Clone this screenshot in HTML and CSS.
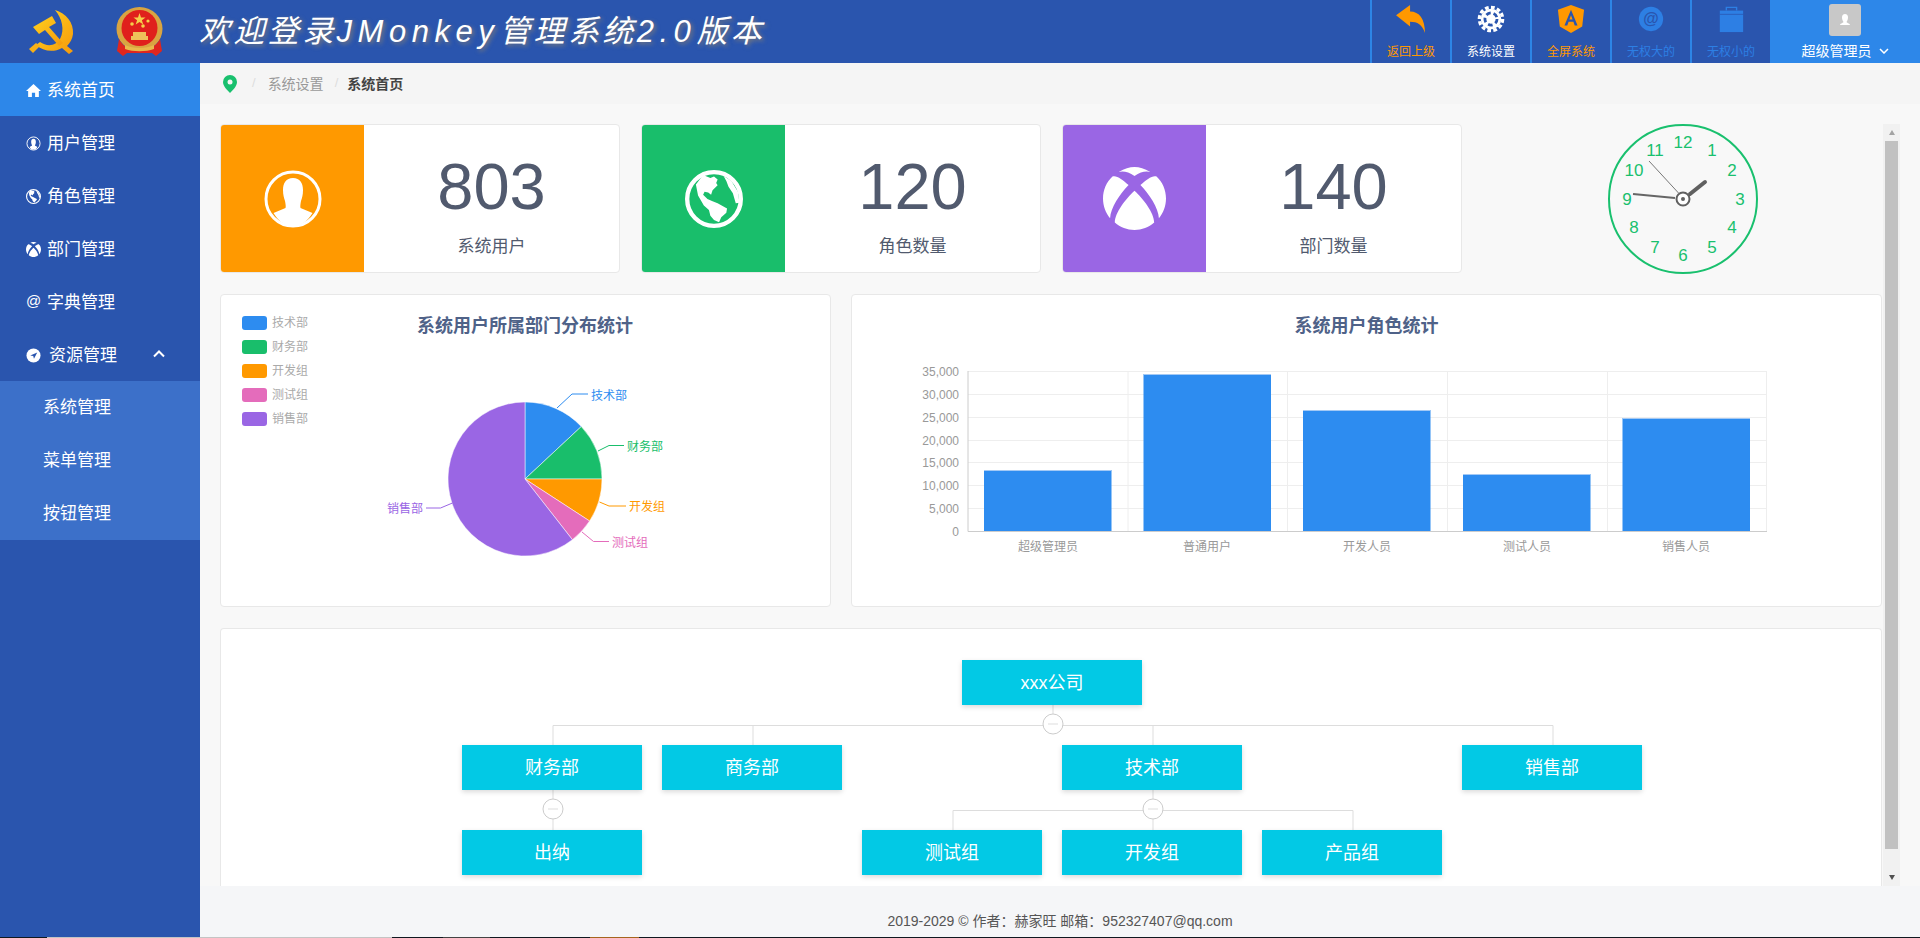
FILE: index.html
```html
<!DOCTYPE html>
<html lang="en">
<head>
    <meta charset="UTF-8">
    <meta name="viewport" content="width=device-width, initial-scale=1.0">
    <title>JMonkey管理系统</title>
    <link rel="stylesheet" href="styles.css">
</head>
<body>
    <header class="topbar">
        <div class="logos">
            <svg class="logo-party" viewBox="0 0 46 44">
                <defs>
                    <linearGradient id="gold" x1="0" y1="0" x2="1" y2="1">
                        <stop offset="0" stop-color="#ffd21f"/>
                        <stop offset="1" stop-color="#f59a0c"/>
                    </linearGradient>
                </defs>
                <path d="M27 0C38 3 46 13 45 24c-.5 5-3 9-6 12l6 5-4 3-7-6c-9 5-19 3-26-3l4-3c7 5 16 4 20-3 5-9 2-21-5-29z" fill="url(#gold)"/>
                <path d="M5 17L24 6l4 7-7 4 14 16-4 3-14-16-6 4z" fill="url(#gold)"/>
                <path d="M1 39l7-6 4 3-7 7z" fill="#f7b016"/>
            </svg>
            <svg class="logo-emblem" viewBox="0 0 47 50">
                <ellipse cx="23.5" cy="22" rx="23" ry="22" fill="#d9a441"/>
                <ellipse cx="23.5" cy="21" rx="18" ry="18" fill="#e0201c"/>
                <path d="M23.5 6l1.5 4.5h4.5l-3.6 2.7 1.4 4.4-3.8-2.7-3.8 2.7 1.4-4.4-3.6-2.7H22z" fill="#f5cf4a"/>
                <circle cx="16" cy="17" r="1.8" fill="#f5cf4a"/>
                <circle cx="27" cy="19" r="1.8" fill="#f5cf4a"/>
                <circle cx="32" cy="14" r="1.6" fill="#f5cf4a"/>
                <path d="M15 33h17v-4h-2v-4H17v4h-2z" fill="#eec25a"/>
                <path d="M3 32c4 8 12 12 20 12s17-4 21-12l2 12-6 5-4-3H11l-4 3-6-5z" fill="#e0261e"/>
                <path d="M9 38c8 4 21 4 29 0v4c-8 3-21 3-29 0z" fill="#e8b94c"/>
            </svg>
        </div>
        <h1 class="site-title">欢迎登录<span class="title-en">JMonkey</span>管理系统<span class="title-en">2.0</span>版本</h1>
        <nav class="top-nav">
            <a class="top-item orange">
                <svg viewBox="0 0 32 30" class="top-icon"><path d="M0 11L15 0v7c10 0 16 8 16 23-3-9-8-12-16-12v5z" fill="#ff9800"/></svg>
                <span>返回上级</span>
            </a>
            <a class="top-item white">
                <svg viewBox="0 0 30 30" class="top-icon">
                    <circle cx="15" cy="15" r="11" fill="#fff"/>
                    <circle cx="15" cy="15" r="12.500" fill="none" stroke="#fff" stroke-width="3.500" stroke-dasharray="4 2.500"/>
                    <circle cx="15" cy="15" r="6.500" fill="none" stroke="#2a55ae" stroke-width="3" stroke-dasharray="5 3.170"/>
                </svg>
                <span>系统设置</span>
            </a>
            <a class="top-item orange">
                <svg viewBox="0 0 28 30" class="top-icon">
                    <path d="M14 0l14 5-2 18-12 7-12-7L0 5z" fill="#ff9800"/>
                    <path d="M14 5L7 22h3l1.400-4h5.200l1.400 4h3zM12.300 15.500L14 11l1.700 4.500z" fill="#2a55ae"/>
                </svg>
                <span>全屏系统</span>
            </a>
            <a class="top-item blue">
                <svg viewBox="0 0 30 30" class="top-icon">
                    <circle cx="15" cy="15" r="13" fill="#2d7fe4"/>
                    <text x="15" y="20.500" class="at-glyph">@</text>
                </svg>
                <span>无权大的</span>
            </a>
            <a class="top-item blue">
                <svg viewBox="0 0 30 30" class="top-icon">
                    <path d="M3 6h25v23H3z" fill="#2d7fe4"/>
                    <path d="M10 6V2.500h11V6" fill="none" stroke="#2d7fe4" stroke-width="1.500"/>
                    <path d="M3 10h25" stroke="#2a55ae" stroke-width="0.800"/>
                </svg>
                <span>无权小的</span>
            </a>
        </nav>
        <div class="user-box">
            <div class="avatar">
                <svg viewBox="0 0 16 16" class="avatar-icon"><path d="M8 2c2 0 3 1.500 3 3.500S10 9 9.500 10c0 1 3 1 3.500 3H3c.5-2 3.500-2 3.500-3C6 9 5 7.500 5 5.500S6 2 8 2z" fill="#fff"/></svg>
            </div>
            <div class="user-name">超级管理员
                <svg viewBox="0 0 10 6" class="user-caret"><path d="M1 1l4 4 4-4" fill="none" stroke="#fff" stroke-width="1.500"/></svg>
            </div>
        </div>
    </header>

    <div class="layout">
        <aside class="sidebar">
            <a class="menu-item active">
                <svg viewBox="0 0 14 14" class="menu-icon"><path d="M7 1L0 7.500h2V13h3.500V9h3v4H12V7.500h2z" fill="#fff"/></svg>
                <span>系统首页</span>
            </a>
            <a class="menu-item">
                <svg viewBox="0 0 16 16" class="menu-icon"><circle cx="8" cy="8" r="7" fill="none" stroke="#fff" stroke-width="1"/><path d="M8 3c1.600 0 2.500 1.200 2.500 3s-.6 3-1 3.800c0 .7 1.500 1 2.700 1.800C11.200 13.600 9.700 14.500 8 14.500s-3.200-.9-4.200-2.900c1.200-.8 2.700-1.100 2.700-1.800-.4-.8-1-2-1-3.800S6.400 3 8 3z" fill="#fff"/></svg>
                <span>用户管理</span>
            </a>
            <a class="menu-item">
                <svg viewBox="0 0 16 16" class="menu-icon"><use href="#globe-shape"/></svg>
                <span>角色管理</span>
            </a>
            <a class="menu-item">
                <svg viewBox="0 0 16 16" class="menu-icon"><use href="#xbox-shape"/></svg>
                <span>部门管理</span>
            </a>
            <a class="menu-item">
                <span class="menu-at">@</span>
                <span>字典管理</span>
            </a>
            <a class="menu-item">
                <svg viewBox="0 0 16 16" class="menu-icon"><circle cx="8" cy="8" r="7.500" fill="#fff"/><path d="M12 4.800L8.500 11.500 7.700 8.500 4.500 8z" fill="#2a55ae"/></svg>
                <span class="menu-open">资源管理</span>
                <svg viewBox="0 0 12 8" class="menu-caret"><path d="M1 6.500l5-5 5 5" fill="none" stroke="#fff" stroke-width="2"/></svg>
            </a>
            <div class="submenu">
                <a class="sub-item">系统管理</a>
                <a class="sub-item">菜单管理</a>
                <a class="sub-item">按钮管理</a>
            </div>
        </aside>

        <main class="main">
            <div class="breadcrumb">
                <svg viewBox="0 0 14 18" class="crumb-pin"><path d="M7 0a7 7 0 0 1 7 7c0 4-4 8-7 11-3-3-7-7-7-11a7 7 0 0 1 7-7z" fill="#19c06e"/><circle cx="7" cy="7" r="2.500" fill="#f5f5f5"/></svg>
                <span class="crumb-sep">/</span>
                <span class="crumb-link">系统设置</span>
                <span class="crumb-sep">/</span>
                <span class="crumb-now">系统首页</span>
            </div>

            <div class="scroll-wrap">
                <div class="content">
                    <section class="stats-row">
                        <div class="stat-card">
                            <div class="stat-icon orange-bg">
                                <svg viewBox="0 0 58 58" class="stat-svg">
                                    <circle cx="29" cy="29" r="27" fill="none" stroke="#fff" stroke-width="3"/>
                                    <path d="M29 8c7 0 10 5 10 12 0 5-1 8-2 11-.5 3-1 5-.5 7l12 5c-4 7-11 13-19.500 13S13.500 50 9.500 43l12-5c.5-2 0-4-.5-7-1-3-2-6-2-11 0-7 3-12 10-12z" fill="#fff"/>
                                </svg>
                            </div>
                            <div class="stat-body">
                                <div class="stat-num">803</div>
                                <div class="stat-label">系统用户</div>
                            </div>
                        </div>
                        <div class="stat-card">
                            <div class="stat-icon green-bg">
                                <svg viewBox="0 0 16 16" class="stat-svg"><use href="#globe-shape"/></svg>
                            </div>
                            <div class="stat-body">
                                <div class="stat-num">120</div>
                                <div class="stat-label">角色数量</div>
                            </div>
                        </div>
                        <div class="stat-card">
                            <div class="stat-icon purple-bg">
                                <svg viewBox="0 0 16 16" class="stat-svg xbox-svg"><use href="#xbox-shape"/></svg>
                            </div>
                            <div class="stat-body">
                                <div class="stat-num">140</div>
                                <div class="stat-label">部门数量</div>
                            </div>
                        </div>
                        <div class="clock-box">
                            <svg viewBox="0 0 150 150" class="clock">
                                <circle cx="75" cy="75" r="74" fill="none" stroke="#19c06e" stroke-width="2"/>
                                <g class="clock-nums">
                                    <text x="75" y="24">12</text>
                                    <text x="104" y="32">1</text>
                                    <text x="124" y="52">2</text>
                                    <text x="132" y="81">3</text>
                                    <text x="124" y="109">4</text>
                                    <text x="104" y="129">5</text>
                                    <text x="75" y="137">6</text>
                                    <text x="47" y="129">7</text>
                                    <text x="26" y="109">8</text>
                                    <text x="19" y="81">9</text>
                                    <text x="26" y="52">10</text>
                                    <text x="47" y="32">11</text>
                                </g>
                                <line x1="82" y1="70" x2="97" y2="58" stroke="#606060" stroke-width="4" stroke-linecap="round"/>
                                <line x1="67" y1="74" x2="25" y2="70" stroke="#666" stroke-width="2"/>
                                <line x1="70.500" y1="69" x2="41" y2="37" stroke="#777" stroke-width="1"/>
                                <circle cx="75" cy="75" r="6.500" fill="#fff" stroke="#606060" stroke-width="2"/>
                                <circle cx="75" cy="75" r="2" fill="#606060"/>
                            </svg>
                        </div>
                    </section>

                    <section class="charts-row">
                        <div class="panel pie-panel">
                            <svg viewBox="0 1 609 311" class="chart">
                                <text x="304" y="38" class="chart-title">系统用户所属部门分布统计</text>
                                <g class="legend-text">
                                    <rect x="21" y="22" width="25" height="14" rx="3" fill="#2d8cf0"/>
                                    <text x="51" y="33">技术部</text>
                                    <rect x="21" y="46" width="25" height="14" rx="3" fill="#19be6b"/>
                                    <text x="51" y="57">财务部</text>
                                    <rect x="21" y="70" width="25" height="14" rx="3" fill="#ff9900"/>
                                    <text x="51" y="81">开发组</text>
                                    <rect x="21" y="94" width="25" height="14" rx="3" fill="#e46cbb"/>
                                    <text x="51" y="105">测试组</text>
                                    <rect x="21" y="118" width="25" height="14" rx="3" fill="#9a66e4"/>
                                    <text x="51" y="129">销售部</text>
                                </g>
                                <g stroke="#fff" stroke-width="0.500">
                                    <path d="M304 185V108A77 77 0 0 1 360.300 132.500Z" fill="#2d8cf0"/>
                                    <path d="M304 185L360.300 132.500A77 77 0 0 1 381 185Z" fill="#19be6b"/>
                                    <path d="M304 185H381A77 77 0 0 1 368.600 227Z" fill="#ff9900"/>
                                    <path d="M304 185L368.600 227A77 77 0 0 1 351.400 245.700Z" fill="#e46cbb"/>
                                    <path d="M304 185L351.400 245.700A77 77 0 1 1 304 108Z" fill="#9a66e4"/>
                                </g>
                                <g fill="none" stroke-width="1">
                                    <path d="M336 114L351 100H367" stroke="#2d8cf0"/>
                                    <path d="M377 157L388 151.500H403" stroke="#19be6b"/>
                                    <path d="M378.500 208L388 212H405" stroke="#ff9900"/>
                                    <path d="M361 238L372.500 247.500H388" stroke="#e46cbb"/>
                                    <path d="M231.500 209L219.500 214H205" stroke="#9a66e4"/>
                                </g>
                                <g class="pie-labels">
                                    <text x="370" y="106" fill="#2d8cf0">技术部</text>
                                    <text x="406" y="157" fill="#19be6b">财务部</text>
                                    <text x="408" y="217" fill="#ff9900">开发组</text>
                                    <text x="391" y="253" fill="#e46cbb">测试组</text>
                                    <text x="166" y="219" fill="#9a66e4">销售部</text>
                                </g>
                            </svg>
                        </div>
                        <div class="panel bar-panel">
                            <svg viewBox="0 1 1029 311" class="chart">
                                <text x="514.500" y="38" class="chart-title">系统用户角色统计</text>
                                <g stroke="#eee" stroke-width="1">
                                    <path d="M116 77.500H915M116 100.500H915M116 123.500H915M116 146.500H915M116 168.500H915M116 191.500H915M116 214.500H915"/>
                                    <path d="M276 77V237M435.500 77V237M595.500 77V237M755.500 77V237M914.500 77V237"/>
                                </g>
                                <g class="bars">
                                    <rect x="132" y="176" width="127.500" height="61"/>
                                    <rect x="291.500" y="80" width="127.500" height="157"/>
                                    <rect x="451" y="116" width="127.500" height="121"/>
                                    <rect x="611" y="180" width="127.500" height="57"/>
                                    <rect x="770.500" y="124" width="127.500" height="113"/>
                                </g>
                                <path class="bar-tops" d="M132 176.500h127.500M291.500 80.500h127.500M451 116.500h127.500M611 180.500h127.500M770.500 124.500h127.500"/>
                                <path d="M116 77V237.500H915" fill="none" stroke="#ccc" stroke-width="1"/>
                                <g class="y-labels">
                                    <text x="107" y="82">35,000</text>
                                    <text x="107" y="105">30,000</text>
                                    <text x="107" y="128">25,000</text>
                                    <text x="107" y="151">20,000</text>
                                    <text x="107" y="173">15,000</text>
                                    <text x="107" y="196">10,000</text>
                                    <text x="107" y="219">5,000</text>
                                    <text x="107" y="242">0</text>
                                </g>
                                <g class="x-labels">
                                    <text x="196" y="257">超级管理员</text>
                                    <text x="355" y="257">普通用户</text>
                                    <text x="515" y="257">开发人员</text>
                                    <text x="675" y="257">测试人员</text>
                                    <text x="834" y="257">销售人员</text>
                                </g>
                            </svg>
                        </div>
                    </section>

                    <section class="panel org-panel">
                        <div class="org-canvas">
                            <svg viewBox="0 0 1661 257" class="org-lines">
                                <path d="M831 31V96M331 116V96.500H1331V116M531 96V116M931 96V116M331 161V201M931 161V201M731 201V181.500H1131V201"/>
                                <circle cx="831" cy="95" r="10"/>
                                <circle cx="331" cy="180" r="10"/>
                                <circle cx="931" cy="180" r="10"/>
                                <path d="M826 95h10M326 180h10M926 180h10"/>
                            </svg>
                            <div class="org-node node-root">xxx公司</div>
                            <div class="org-node node-a">财务部</div>
                            <div class="org-node node-b">商务部</div>
                            <div class="org-node node-c">技术部</div>
                            <div class="org-node node-d">销售部</div>
                            <div class="org-node node-e">出纳</div>
                            <div class="org-node node-f">测试组</div>
                            <div class="org-node node-g">开发组</div>
                            <div class="org-node node-h">产品组</div>
                        </div>
                    </section>
                </div>
                <div class="fake-scroll">
                    <span class="arrow-up"></span>
                    <div class="thumb"></div>
                    <span class="arrow-down"></span>
                </div>
            </div>

            <footer class="footer">2019-2029 © 作者：赫家旺 邮箱：952327407@qq.com</footer>
        </main>
    </div>

    <!-- strip of the window behind the browser -->
    <div class="taskbar">
        <span class="tb-light"></span>
        <span class="tb-gap-a"></span>
        <span class="tb-grey"></span>
        <span class="tb-gap-b"></span>
        <span class="tb-brown"></span>
    </div>

    <!-- shared icon shapes -->
    <svg class="defs-holder">
        <defs>
            <g id="globe-shape">
                <circle cx="8" cy="8" r="7.400" fill="none" stroke="#fff" stroke-width="1.200"/>
                <path d="M5 1.400L7 2.200l1-.4 1 .8-.4 1 .4.600-1.400 1.400-.4 1.200-.8-.6-1-.2-.4.800L6.200 8l1.400.6 1.400.6 2.600 1.400-.2 1.200-1.400 1.200-.6 1.400-1.400-.6-1-1.200-.4-1.600-1.400-1.200L3.600 7 3 4z" fill="#fff"/>
                <path d="M10.600 1.600L12.800 3l1.800 3 .4 3-1 .2-.8-2.800L12 4.600 11.400 3z" fill="#fff"/>
            </g>
            <g id="xbox-shape">
                <path d="M8 2.300C9.500 1.200 11 1 12 1.300 10.500.4 9.300 0 8 0S5.500.4 4 1.300c1-.3 2.500-.1 4 1z" fill="#fff"/>
                <path d="M2.400 2.400C.9 3.800 0 5.800 0 8c0 1.900.7 3.700 1.800 5 .1-2.500 2.500-6.200 4.700-8.400C5 3.200 3.400 2 2.400 2.400zM13.600 2.400C15.100 3.800 16 5.800 16 8c0 1.900-.7 3.700-1.800 5-.1-2.500-2.500-6.200-4.700-8.400C11 3.200 12.600 2 13.600 2.400zM8 6c-2.200 2-5 5.600-5 8.100C4.400 15.300 6.100 16 8 16s3.600-.7 5-1.900C13 11.600 10.200 8 8 6z" fill="#fff"/>
            </g>
        </defs>
    </svg>
</body>
</html>
```

FILE: styles.css
```css
* {
    box-sizing: border-box;
}
html, body {
    margin: 0;
    height: 100%;
    overflow: hidden;
}
body {
    display: flex;
    flex-direction: column;
    font-family: "Liberation Sans", "Noto Sans CJK SC", sans-serif;
    background-color: #f8f8f8;
}
.defs-holder {
    position: absolute;
    width: 0;
    height: 0;
}

/* top bar */
.topbar {
    display: flex;
    align-items: stretch;
    height: 63px;
    flex: none;
    background-color: #2a55ae;
}
.logos {
    width: 199px;
    flex: none;
    display: flex;
    align-items: center;
    padding-left: 28px;
    gap: 42px;
}
.logo-party {
    width: 46px;
    height: 44px;
}
.logo-emblem {
    width: 47px;
    height: 50px;
}
.site-title {
    margin: 0;
    flex: 1;
    font-size: 31px;
    font-style: italic;
    font-weight: normal;
    letter-spacing: 3.4px;
    line-height: 63px;
    color: #fff;
    text-shadow: 2px 2px 4px #7b7b7b;
}
.title-en {
    letter-spacing: 5.5px;
}
.top-nav {
    display: flex;
    flex: none;
}
.top-item {
    width: 80px;
    border-left: 2px solid #2d85e6;
    display: flex;
    flex-direction: column;
    align-items: center;
    font-size: 12px;
    padding-top: 5px;
}
.top-icon {
    width: 30px;
    height: 28px;
    margin-bottom: 11px;
}
.top-item span {
    line-height: 16px;
}
.orange {
    color: #ff9800;
}
.white {
    color: #fff;
}
.blue {
    color: #2d7fe4;
}
.at-glyph {
    font-size: 17px;
    font-weight: bold;
    fill: #2a55ae;
    text-anchor: middle;
}
.user-box {
    width: 150px;
    flex: none;
    background-color: #2d87e9;
    display: flex;
    flex-direction: column;
    align-items: center;
    padding-top: 4px;
    color: #fff;
    font-size: 14px;
}
.avatar {
    width: 32px;
    height: 32px;
    border-radius: 3px;
    background-color: #c8c8c8;
    display: flex;
    align-items: center;
    justify-content: center;
    margin-bottom: 6px;
}
.avatar-icon {
    width: 16px;
    height: 16px;
}
.user-name {
    line-height: 18px;
    display: flex;
    align-items: center;
    gap: 7px;
}
.user-caret {
    width: 10px;
    height: 6px;
}

/* sidebar */
.layout {
    flex: 1;
    min-height: 0;
    display: flex;
}
.sidebar {
    width: 200px;
    flex: none;
    background-color: #2a55ae;
    color: #fff;
    font-size: 17px;
}
.menu-item {
    height: 53px;
    display: flex;
    align-items: center;
    padding: 0 0 2px 26px;
}
.menu-item.active {
    background-color: #2d87e9;
}
.menu-icon {
    width: 15px;
    height: 15px;
    margin: 3px 6px 0 0;
    flex: none;
}
.menu-at {
    width: 15px;
    margin-right: 6px;
    font-size: 15px;
    text-align: center;
}
.menu-open {
    margin-left: 2px;
}
.menu-caret {
    width: 12px;
    height: 8px;
    margin-left: 36px;
}
.submenu {
    background-color: #3c70c9;
}
.sub-item {
    display: block;
    height: 53px;
    line-height: 53px;
    padding-left: 43px;
}

/* main area */
.main {
    flex: 1;
    min-width: 0;
    display: flex;
    flex-direction: column;
}
.breadcrumb {
    height: 41px;
    flex: none;
    background-color: #f5f5f5;
    display: flex;
    align-items: center;
    padding: 0 0 2px 23px;
    font-size: 14px;
    color: #999;
}
.crumb-pin {
    width: 14px;
    height: 18px;
    margin: 2px 15px 0 0;
}
.crumb-sep {
    color: #ddd;
    margin-right: 12px;
    font-size: 13px;
}
.crumb-link {
    margin-right: 11px;
}
.crumb-now {
    color: #444;
    font-weight: bold;
    margin-left: -3px;
}
.scroll-wrap {
    flex: 1;
    min-height: 0;
    display: flex;
    padding: 20px 20px 0 20px;
    overflow: hidden;
}
.content {
    width: 1662px;
    flex: none;
}
.fake-scroll {
    width: 17px;
    flex: none;
    margin-left: 1px;
    background-color: #f1f1f1;
    display: flex;
    flex-direction: column;
    align-items: center;
}
.arrow-up,
.arrow-down {
    width: 0;
    height: 0;
    border-left: 3.5px solid transparent;
    border-right: 3.5px solid transparent;
    flex: none;
}
.arrow-up {
    border-bottom: 5px solid #a3a3a3;
    margin: 6px 0;
}
.arrow-down {
    border-top: 5px solid #505050;
    margin: auto 0 6px;
}
.thumb {
    height: 708px;
    width: 13px;
    flex: none;
    background-color: #c1c1c1;
}

/* stat cards */
.stats-row {
    display: flex;
    gap: 21px;
    height: 149px;
}
.stat-card {
    width: 400px;
    flex: none;
    display: flex;
    background-color: #fff;
    border: 1px solid #e8e8e8;
    border-radius: 4px;
    overflow: hidden;
}
.stat-icon {
    width: 143px;
    flex: none;
    display: flex;
    align-items: center;
    justify-content: center;
}
.orange-bg {
    background-color: #ff9900;
}
.green-bg {
    background-color: #19be6b;
}
.purple-bg {
    background-color: #9a66e4;
}
.stat-svg {
    width: 58px;
    height: 58px;
}
.xbox-svg {
    width: 63px;
    height: 63px;
}
.stat-body {
    flex: 1;
    text-align: center;
    color: #515a6e;
}
.stat-num {
    font-size: 65px;
    line-height: 74px;
    margin-top: 25px;
}
.stat-label {
    font-size: 17px;
    line-height: 22px;
    margin-top: 12px;
}
.clock-box {
    flex: 1;
    display: flex;
    justify-content: center;
}
.clock {
    width: 150px;
    height: 150px;
}
.clock-nums text {
    font-size: 17px;
    fill: #19c06e;
    text-anchor: middle;
}

/* charts */
.charts-row {
    display: flex;
    gap: 20px;
    margin-top: 21px;
}
.panel {
    background-color: #fff;
    border: 1px solid #e8e8e8;
    border-radius: 4px;
}
.pie-panel {
    width: 611px;
    height: 313px;
}
.bar-panel {
    flex: 1;
    height: 313px;
}
.chart {
    display: block;
    width: 100%;
    height: 100%;
}
.chart-title {
    font-size: 18px;
    font-weight: bold;
    fill: #4f6288;
    text-anchor: middle;
}
.legend-text text {
    font-size: 12px;
    fill: #aaa;
}
.pie-labels text {
    font-size: 12px;
}
.bars rect {
    fill: #2d8cf0;
}
.bar-tops {
    fill: none;
    stroke: #a3c9f5;
    stroke-width: 1;
}
.y-labels text {
    font-size: 12px;
    fill: #999;
    text-anchor: end;
}
.x-labels text {
    font-size: 12px;
    fill: #999;
    text-anchor: middle;
}

/* org chart */
.org-panel {
    margin-top: 21px;
    height: 300px;
    border-bottom: none;
}
.org-canvas {
    position: relative;
    margin-left: 1px;
}
.org-lines {
    position: absolute;
    left: 0;
    top: 0;
    width: 1661px;
    height: 257px;
}
.org-lines path {
    fill: none;
    stroke: #ddd;
    stroke-width: 1;
}
.org-lines circle {
    fill: #fff;
    stroke: #ccc;
    stroke-width: 1;
}
.org-node {
    position: absolute;
    width: 180px;
    height: 45px;
    line-height: 47px;
    background-color: #02c9e5;
    color: #fff;
    font-size: 18px;
    text-align: center;
    box-shadow: 0 2px 5px rgba(0, 0, 0, 0.15);
}
.node-root { left: 740px; top: 31px; }
.node-a { left: 240px; top: 116px; }
.node-b { left: 440px; top: 116px; }
.node-c { left: 840px; top: 116px; }
.node-d { left: 1240px; top: 116px; }
.node-e { left: 240px; top: 201px; }
.node-f { left: 640px; top: 201px; }
.node-g { left: 840px; top: 201px; }
.node-h { left: 1040px; top: 201px; }

.footer {
    height: 51px;
    flex: none;
    background-color: #f5f6f8;
    text-align: center;
    font-size: 14px;
    line-height: 71px;
    color: #555;
    position: relative;
    z-index: 1;
}

/* bottom strip */
.taskbar {
    height: 1px;
    flex: none;
    display: flex;
    background-color: #101820;
    padding-left: 47px;
}
.tb-light {
    width: 345px;
    background-color: #c4c4c4;
}
.tb-gap-a {
    width: 51px;
}
.tb-grey {
    width: 47px;
    background-color: #444;
}
.tb-gap-b {
    width: 100px;
}
.tb-brown {
    width: 49px;
    background-color: #a5651f;
}
```
